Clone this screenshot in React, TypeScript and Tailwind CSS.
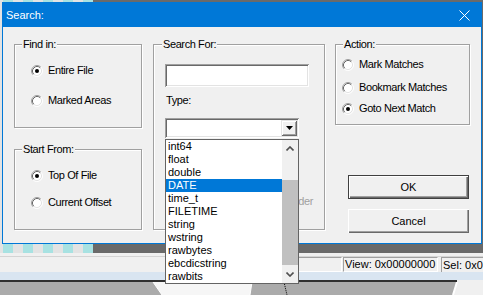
import type { ReactNode } from "react";

const SUNKEN =
  "shadow-[inset_1px_1px_0_#a0a0a0,inset_-1px_-1px_0_#ffffff,inset_2px_2px_0_#696969,inset_-2px_-2px_0_#e3e3e3]";
const RAISED =
  "shadow-[inset_1px_1px_0_#e3e3e3,inset_-1px_-1px_0_#696969,inset_2px_2px_0_#ffffff,inset_-2px_-2px_0_#a0a0a0]";

const types = [
  "int64",
  "float",
  "double",
  "DATE",
  "time_t",
  "FILETIME",
  "string",
  "wstring",
  "rawbytes",
  "ebcdicstring",
  "rawbits",
];

function Radio({ label, checked }: { label: string; checked?: boolean }) {
  return (
    <div className="flex h-[13px] items-center gap-[5px]">
      <svg width="12" height="12" viewBox="0 0 12 12" className="shrink-0">
        <circle cx="6" cy="6" r="5" fill="#fff" />
        <path d="M2.11 9.89 A5.5 5.5 0 0 1 9.89 2.11" stroke="#a0a0a0" fill="none" />
        <path d="M9.89 2.11 A5.5 5.5 0 0 1 2.11 9.89" stroke="#ffffff" fill="none" />
        <path d="M2.82 9.18 A4.5 4.5 0 0 1 9.18 2.82" stroke="#696969" fill="none" />
        <path d="M9.18 2.82 A4.5 4.5 0 0 1 2.82 9.18" stroke="#e3e3e3" fill="none" />
        {checked && <circle cx="6" cy="6" r="2" fill="#000" />}
      </svg>
      <span className="leading-[13px] whitespace-nowrap">{label}</span>
    </div>
  );
}

function Group({
  title,
  className,
  labelLeft = "left-[7px]",
  children,
}: {
  title: string;
  className: string;
  labelLeft?: string;
  children?: ReactNode;
}) {
  return (
    <div
      className={`relative border border-[#a0a0a0] shadow-[1px_1px_0_#ffffff,inset_1px_1px_0_#ffffff] ${className}`}
    >
      <span
        className={`absolute top-[-7px] ${labelLeft} bg-[#f0f0f0] px-[1px] leading-[13px] whitespace-nowrap`}
      >
        {title}
      </span>
      {children}
    </div>
  );
}

function TypeCombo() {
  return (
    <div className={`relative mt-[11px] flex h-[20px] w-[134px] justify-end bg-white p-[2px] ${SUNKEN}`}>
      <div className={`flex h-[16px] w-[16px] items-center justify-center bg-[#f0f0f0] ${RAISED}`}>
        <svg width="7" height="4" viewBox="0 0 7 4">
          <polygon points="0,0 7,0 3.5,4" fill="#000" />
        </svg>
      </div>

      <div className="absolute left-0 top-[21px] z-10 flex h-[145px] w-[134px] border border-[#646464] bg-white text-[11px] tracking-normal">
        <div className="flex-1">
          {types.map((t) => (
            <div
              key={t}
              className={`h-[13px] pl-[2px] leading-[13px] ${
                t === "DATE" ? "bg-[#0078d7] text-white" : "text-black"
              }`}
            >
              {t}
            </div>
          ))}
        </div>
        <div className="flex w-[16px] flex-col bg-[#f0f0f0]">
          <div className="flex h-[17px] items-center justify-center">
            <svg width="8" height="5" viewBox="0 0 8 5">
              <polyline points="0.5,4.5 4,1 7.5,4.5" stroke="#505050" strokeWidth="1.6" fill="none" />
            </svg>
          </div>
          <div className="h-[23px]" />
          <div className="h-[85px] bg-[#c0c0c0]" />
          <div className="flex flex-1 items-center justify-center">
            <svg width="8" height="5" viewBox="0 0 8 5">
              <polyline points="0.5,0.5 4,4 7.5,0.5" stroke="#505050" strokeWidth="1.6" fill="none" />
            </svg>
          </div>
        </div>
      </div>
    </div>
  );
}

function SearchDialog() {
  return (
    <div className="absolute left-[2px] top-[2px] flex h-[242px] w-[480px] flex-col border border-[#0078d7] bg-[#f0f0f0] text-[11px] tracking-[-0.4px] text-black">
      <div className="flex h-[24px] shrink-0 items-center justify-between bg-[#0078d7] pl-[3px] pr-[11px] text-white">
        <span className="leading-[13px] tracking-normal">Search:</span>
        <svg width="11" height="11" viewBox="0 0 11 11">
          <path d="M0.5 0.5 L10.5 10.5 M10.5 0.5 L0.5 10.5" stroke="#fff" strokeWidth="1" />
        </svg>
      </div>

      <div className="flex pl-[11px] pt-[17px]">
        <div className="flex w-[128px] flex-col gap-[21px]">
          <Group title="Find in:" className="h-[84px] pl-[16px] pt-[19px]">
            <Radio label="Entire File" checked />
            <div className="h-[17px]" />
            <Radio label="Marked Areas" />
          </Group>
          <Group title="Start From:" className="h-[81px] pl-[16px] pt-[19px]">
            <Radio label="Top Of File" checked />
            <div className="h-[14px]" />
            <Radio label="Current Offset" />
          </Group>
        </div>

        <Group
          title="Search For:"
          labelLeft="left-[8px]"
          className="ml-[11px] flex h-[186px] w-[172px] flex-col pl-[11px] pt-[19px]"
        >
          <div className={`h-[23px] w-[144px] bg-white ${SUNKEN}`} />
          <div className="ml-[1px] mt-[7px] leading-[13px]">Type:</div>
          <TypeCombo />
          <div className="mt-[57px] flex justify-end pr-[11px] leading-[13px] text-[#a0a0a0]">
            Byte Order
          </div>
        </Group>

        <div className="ml-[10px] flex w-[135px] flex-col">
          <Group title="Action:" className="h-[81px] pl-[6px] pt-[13px]">
            <Radio label="Mark Matches" />
            <div className="h-[10px]" />
            <Radio label="Bookmark Matches" />
            <div className="h-[8px]" />
            <Radio label="Goto Next Match" checked />
          </Group>
          <button className="ml-[13px] mt-[50px] flex h-[24px] w-[121px] items-center justify-center border border-[#404040] bg-[#f0f0f0] leading-[13px] tracking-normal shadow-[inset_1px_1px_0_#ffffff,inset_-1px_-1px_0_#696969,inset_-2px_-2px_0_#a0a0a0]">
            OK
          </button>
          <button className="ml-[13px] mt-[10px] flex h-[24px] w-[121px] items-center justify-center bg-[#f0f0f0] leading-[13px] tracking-normal shadow-[inset_1px_1px_0_#ffffff,inset_-1px_-1px_0_#696969,inset_-2px_-2px_0_#a0a0a0]">
            Cancel
          </button>
        </div>
      </div>
    </div>
  );
}

export default function App() {
  const stripes = Array.from({ length: 9 }, (_, i) => i);
  return (
    <div className="relative h-[295px] w-[483px] overflow-hidden bg-[#f0f0f0] font-['Liberation_Sans',Arial,sans-serif] text-black">
      <div className="flex h-[253px]">
        <div className="w-[3px] bg-[#e3e3e3]" />
        {stripes.map((i) => (
          <div key={i} className={`w-[10px] ${i % 2 === 0 ? "bg-[#a8e2e2]" : "bg-[#e3e3e3]"}`} />
        ))}
        <div className="flex-1 bg-[#6a6a6a]" />
      </div>
      <div className="h-[4px] border-b border-[#d4d4d4] bg-[#f0f0f0]" />
      <div className="flex h-[15px] overflow-hidden text-[11px]">
        <div className="ml-[200px] w-[142px] shrink-0 border border-[#a0a0a0] border-b-white border-r-white" />
        <div className="ml-[1px] flex w-[95px] shrink-0 items-center overflow-hidden whitespace-nowrap border border-[#a0a0a0] border-b-white border-r-white pl-[1px] leading-[13px]">
          View: 0x00000000
        </div>
        <div className="ml-[3px] flex w-[42px] shrink-0 items-center overflow-hidden whitespace-nowrap border-l border-t border-[#a0a0a0] pl-[1px] leading-[13px]">
          Sel: 0x0
        </div>
      </div>
      <div className="h-[8px] bg-[#d9e5f1]" />
      <div className="flex h-[2px]">
        <div className="w-[457px] bg-[#303030]" />
        <div className="flex-1 bg-[#f0f0f0]" />
      </div>
      <svg width="483" height="13" viewBox="0 0 483 13" className="block">
        <rect x="0" y="0" width="483" height="13" fill="#ababab" />
        <polygon points="153,0 252,0 250,13 162,13" fill="#f6f6f6" />
        <line x1="153" y1="0" x2="162" y2="13" stroke="#ffffff" />
        <line x1="252" y1="0" x2="250" y2="13" stroke="#ffffff" />
        <line x1="284" y1="0" x2="287" y2="13" stroke="#000" strokeDasharray="1 1" />
        <polygon points="457,0 483,0 483,13 453,13" fill="#f0f0f0" />
        <line x1="457" y1="0" x2="453" y2="13" stroke="#ffffff" strokeWidth="2" />
      </svg>
      <SearchDialog />
    </div>
  );
}
